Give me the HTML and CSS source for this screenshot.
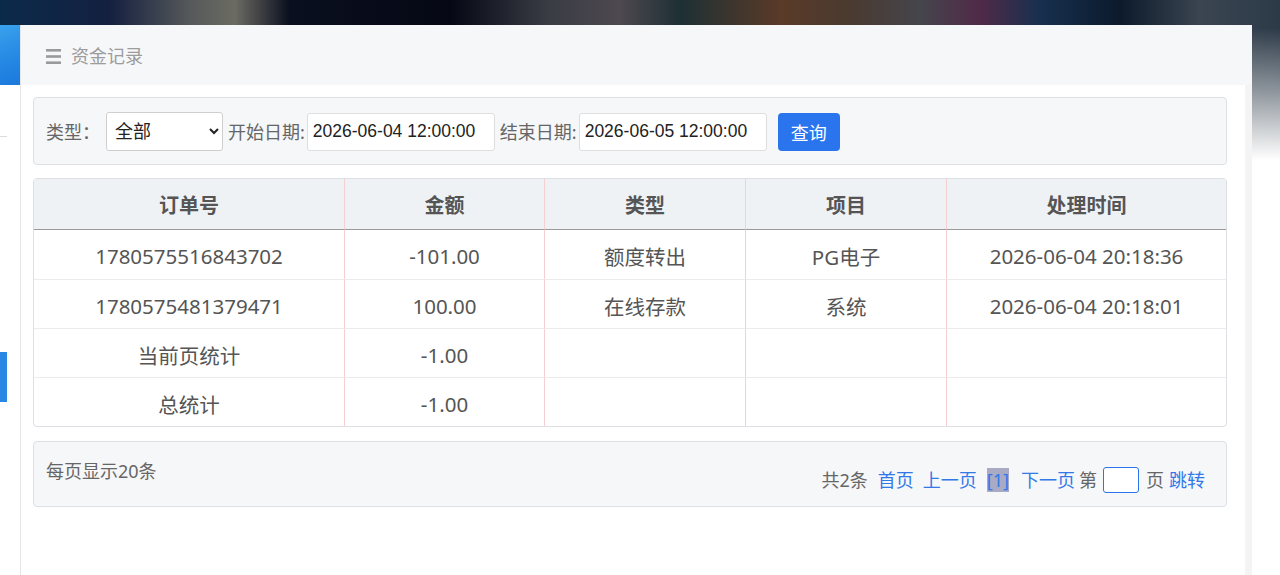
FILE: index.html
```html
<!DOCTYPE html>
<html lang="zh-CN">
<head>
    <meta charset="UTF-8">
    <title>资金记录</title>
    <link rel="stylesheet" href="styles.css">
</head>
<body>
<div class="page">
    <div class="sidebar">
        <div class="side-logo"></div>
        <div class="side-line"></div>
        <div class="side-active"></div>
    </div>

    <div class="main">
        <div class="title-bar">
            <svg class="menu-icon" width="15" height="15" viewBox="0 0 15 15">
                <rect x="0" y="0" width="15" height="2.6" fill="#9a9a9a"/>
                <rect x="0" y="6.2" width="15" height="2.6" fill="#9a9a9a"/>
                <rect x="0" y="12.4" width="15" height="2.6" fill="#9a9a9a"/>
            </svg>
            <span class="title">资金记录</span>
        </div>

        <div class="body-wrap">
            <div class="content">
                <!-- 查询条件 -->
                <div class="search-box">
                    <span class="label">类型：</span>
                    <select class="type-select">
                        <option>全部</option>
                        <option>在线存款</option>
                        <option>额度转出</option>
                    </select>
                    <span class="label ml5">开始日期:</span>
                    <input class="date-input" type="text" value="2026-06-04 12:00:00">
                    <span class="label ml5">结束日期:</span>
                    <input class="date-input" type="text" value="2026-06-05 12:00:00">
                    <button class="btn-search">查询</button>
                </div>

                <!-- 列表 -->
                <div class="table-box">
                    <table class="list">
                        <thead>
                        <tr>
                            <th class="c1">订单号</th>
                            <th class="c2">金额</th>
                            <th class="c3">类型</th>
                            <th class="c4">项目</th>
                            <th>处理时间</th>
                        </tr>
                        </thead>
                        <tbody>
                        <tr>
                            <td>1780575516843702</td>
                            <td>-101.00</td>
                            <td>额度转出</td>
                            <td>PG电子</td>
                            <td>2026-06-04 20:18:36</td>
                        </tr>
                        <tr>
                            <td>1780575481379471</td>
                            <td>100.00</td>
                            <td>在线存款</td>
                            <td>系统</td>
                            <td>2026-06-04 20:18:01</td>
                        </tr>
                        <tr>
                            <td>当前页统计</td>
                            <td>-1.00</td>
                            <td></td>
                            <td></td>
                            <td></td>
                        </tr>
                        <tr>
                            <td>总统计</td>
                            <td>-1.00</td>
                            <td></td>
                            <td></td>
                            <td></td>
                        </tr>
                        </tbody>
                    </table>
                </div>

                <!-- 分页 -->
                <div class="pager">
                    <div class="pager-left">每页显示20条</div>
                    <div class="pager-right">
                        <span>共2条</span>
                        <a class="ml10">首页</a>
                        <a class="ml9">上一页</a>
                        <span class="cur ml10">[1]</span>
                        <a class="ml12">下一页</a>
                        <span class="ml4">第</span>
                        <input class="page-input" type="text">
                        <span class="ml7">页</span>
                        <a class="ml5">跳转</a>
                    </div>
                </div>
            </div>
            <div class="scroll-track"></div>
        </div>
    </div>
</div>
</body>
</html>
```

FILE: styles.css
```css
*{
    margin:0;
    padding:0;
    box-sizing: border-box;
}

body{
    font-family: "Noto Sans", "Noto Sans CJK SC", sans-serif;
    color: #555;
    background-color: #fff;
    /* 背景图：上方一条模糊的深色壁纸，往下淡成白色 */
    background-image:
        linear-gradient(to bottom, rgba(255,255,255,0) 28px, rgba(255,255,255,0.45) 90px, #fff 160px),
        linear-gradient(to right, #0b2a4a 0, #142040 110px, #56595a 190px, #6b6b62 235px, #0a0f1f 290px,
            #050814 450px, #3a3d44 550px, #4e4850 620px, #1d3034 680px, #5a3a28 780px, #4a3a30 850px,
            #45454c 920px, #502a48 980px, #17304e 1040px, #0c1a2c 1120px, #3a4550 1200px, #2c3a48 1280px);
    background-repeat: no-repeat;
    height: 100vh;
    overflow: hidden;
}

.page{
    display: flex;
    height: 100vh;
}

/* 左侧菜单，只露出一小截 */
.sidebar{
    width: 21px;
    margin-top: 25px;
    background: #fff;
    border-right: 1px solid #e4e6e9;
}
.side-logo{
    height: 60px;
    background: linear-gradient(160deg, #3aa2ec 0, #2a8fe6 40%, #1b78dd 100%);
}
.side-line{
    width: 7px;
    height: 1px;
    margin-top: 51px;
    background: #dcdcdc;
}
.side-active{
    width: 7px;
    height: 50px;
    margin-top: 215px;
    background: #2886e4;
}

.main{
    flex: 1;
    margin-top: 25px;
    margin-right: 28px;
    background: #fff;
    display: flex;
    flex-direction: column;
}

.title-bar{
    height: 60px;
    background: #f6f7f9;
    display: flex;
    align-items: center;
    padding: 2px 0 0 25px;
}
.menu-icon{
    margin-right: 10px;
}
.title{
    font-size: 18px;
    color: #9c9c9c;
    line-height: 24px;
}

.body-wrap{
    flex: 1;
    display: flex;
}
.content{
    flex: 1;
    padding: 12px 18px 0 12px;
}
.scroll-track{
    width: 7px;
    background: #f4f4f4;
}

/* 查询条件 */
.search-box{
    display: flex;
    align-items: center;
    height: 68px;
    padding: 1px 12px 0;
    background: #f6f7f9;
    border: 1px solid #dcdfe3;
    border-radius: 4px;
    font-size: 18px;
    color: #666;
}
.label{
    line-height: 24px;
}
.type-select{
    width: 117px;
    height: 39px;
    margin-left: 6px;
    padding-left: 4px;
    border: 1px solid #cfcfcf;
    border-radius: 3px;
    background: #fff;
    font-family: "Noto Sans", "Noto Sans CJK SC", sans-serif;
    font-size: 18px;
    color: #222;
    margin-top: -1px;
}
.date-input{
    width: 188px;
    height: 38px;
    margin-left: 2px;
    padding: 0 5px;
    border: 1px solid #dedede;
    border-radius: 3px;
    background: #fff;
    font-family: "Liberation Sans", sans-serif;
    font-size: 17.5px;
    color: #222;
    outline: none;
}
.btn-search{
    width: 62px;
    height: 38px;
    margin-left: 11px;
    border: 0;
    border-radius: 4px;
    background: #2a75ed;
    color: #fff;
    font-family: "Noto Sans", "Noto Sans CJK SC", sans-serif;
    font-size: 18px;
    cursor: pointer;
}

/* 列表 */
.table-box{
    margin-top: 13px;
    border: 1px solid #dcdfe3;
    border-radius: 4px;
    overflow: hidden;
}
.list{
    width: 100%;
    border-collapse: separate;
    border-spacing: 0;
    table-layout: fixed;
    font-size: 20.5px;
    text-align: center;
}
.list th{
    height: 51px;
    background: #eff2f5;
    border-bottom: 1px solid #9a9a9a;
    border-left: 1px solid #f6d0d0;
    font-weight: bold;
    color: #555;
    font-size: 20px;
}
.list td{
    height: 49px;
    padding-top: 3px;
    border-top: 1px solid #ececec;
    border-left: 1px solid #f6d0d0;
    color: #555;
}
.list tbody tr:first-child td{
    border-top: none;
    height: 49px;
}
.list th:first-child,
.list td:first-child{
    border-left: none;
}
.c1{ width: 310px; }
.c2{ width: 200px; }
.c3{ width: 201px; }
.c4{ width: 201px; }

/* 分页 */
.pager{
    margin-top: 14px;
    height: 66px;
    display: flex;
    justify-content: space-between;
    align-items: flex-start;
    padding: 17px 21px 0 12px;
    background: #f6f7f9;
    border: 1px solid #dcdfe3;
    border-radius: 4px;
    font-size: 18px;
    color: #666;
}
.pager-left{
    line-height: 24px;
}
.pager-right{
    display: flex;
    align-items: center;
    margin-top: 8px;
    height: 26px;
    line-height: 24px;
}
.pager-right a{
    color: #3278e8;
    cursor: pointer;
}
.cur{
    height: 24px;
    background: #a9aac4;
    color: #3278e8;
}
.page-input{
    width: 36px;
    height: 26px;
    margin-left: 6px;
    border: 1px solid #2a75ed;
    border-radius: 3px;
    background: #fff;
    outline: none;
}

.ml4{ margin-left: 4px; }
.ml5{ margin-left: 5px; }
.ml6{ margin-left: 6px; }
.ml7{ margin-left: 7px; }
.ml9{ margin-left: 9px; }
.ml10{ margin-left: 10px; }
.ml12{ margin-left: 12px; }
```
